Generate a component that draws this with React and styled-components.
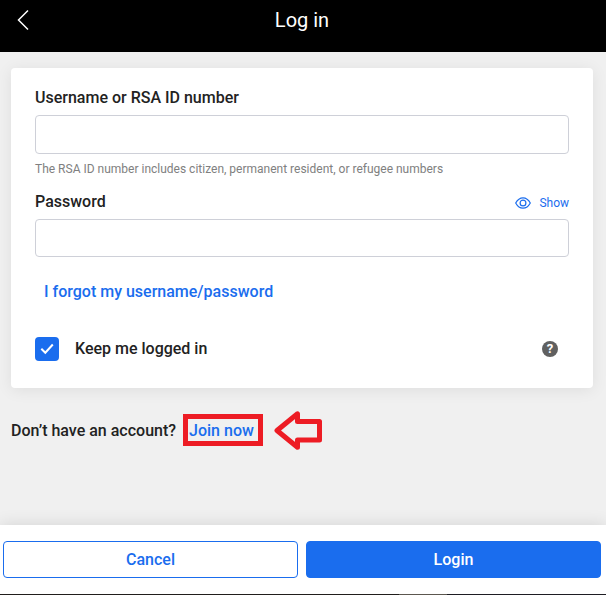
import React, { useState } from 'react';
import styled, { createGlobalStyle } from 'styled-components';

const GlobalStyle = createGlobalStyle`
  * {
    box-sizing: border-box;
  }

  body {
    margin: 0;
    background-color: #f0f0f0;
    color: #222;
    font-family: Roboto, "Liberation Sans", sans-serif;
    font-size: 16px;
    font-weight: 500;
    line-height: 20px;
  }
`;

const Page = styled.div`
  display: flex;
  flex-direction: column;
  height: 100vh;
  overflow: hidden;
`;

const Header = styled.header`
  display: grid;
  grid-template-columns: 40px 1fr 40px;
  align-items: center;
  flex: none;
  height: 52px;
  padding: 0 2px 12px 0;
  background-color: #000;
  color: #fff;
`;

const BackButton = styled.button`
  display: flex;
  height: 22px;
  padding: 0 0 0 16px;
  border: none;
  background: none;
  color: inherit;
`;

const Title = styled.h1`
  margin: 0;
  font-size: 20px;
  font-weight: 400;
  line-height: 24px;
  text-align: center;
`;

const Main = styled.main`
  flex: 1;
  padding: 16px 13px 0 11px;
`;

const Card = styled.section`
  display: flex;
  flex-direction: column;
  height: 320px;
  padding: 20px 24px 27px;
  border-radius: 4px;
  background-color: #fff;
  box-shadow: 0 2px 16px rgba(0, 0, 0, 0.08);
`;

const LabelRow = styled.div`
  display: flex;
  justify-content: space-between;
  align-items: center;
  height: 20px;
  margin-top: ${({ $top }) => $top || 0}px;
  margin-bottom: 7px;
`;

const Input = styled.input`
  width: 100%;
  height: ${({ $height }) => $height}px;
  padding: 0 12px;
  border: 1px solid #ced0d8;
  border-radius: 4px;
  background-color: #fff;
  font: inherit;
  outline: none;
`;

const Hint = styled.p`
  margin: 7px 0 0;
  color: #808080;
  font-size: 12px;
  font-weight: 400;
  line-height: 17px;
`;

const ShowButton = styled.button`
  display: flex;
  align-items: center;
  gap: 8px;
  padding: 2px 0 0;
  border: none;
  background: none;
  color: #1a6dee;
  font: inherit;
  font-size: 12px;
  font-weight: 400;
`;

const Link = styled.a`
  color: #1a6dee;
  text-decoration: none;
`;

const ForgotLink = styled(Link)`
  margin: 25px 0 0 9px;
`;

const RememberRow = styled.div`
  display: flex;
  align-items: center;
  height: 24px;
  margin-top: 35px;
`;

const Checkbox = styled.button`
  width: 24px;
  height: 24px;
  margin-right: 16px;
  padding: 0;
  border: none;
  border-radius: 4px;
  background-color: #1a6dee;
  line-height: 0;
`;

const HelpBadge = styled.span`
  display: flex;
  align-items: center;
  justify-content: center;
  width: 16px;
  height: 16px;
  margin: 0 11px 0 auto;
  border-radius: 50%;
  background-color: #606060;
  color: #fff;
  font-size: 13px;
  font-weight: 700;
  line-height: 16px;
`;

const JoinRow = styled.div`
  display: flex;
  align-items: center;
  height: 40px;
  margin-top: 22px;
`;

const JoinText = styled.span`
  padding-top: 2px;
`;

const JoinBox = styled.div`
  display: flex;
  align-items: center;
  width: 80px;
  height: 32px;
  margin: 0 11px 0 7px;
  padding: 2px 0 0 1px;
  border: 5px solid #ed1c24;
  white-space: nowrap;
`;

const Footer = styled.footer`
  display: flex;
  gap: 8px;
  flex: none;
  height: 69px;
  padding: 16px 5px 16px 3px;
  background-color: #fff;
  box-shadow: 0 0 16px rgba(0, 0, 0, 0.12);
`;

const Button = styled.button`
  flex: 1;
  padding: 0;
  border: 1px solid #1a6dee;
  border-radius: 4px;
  background-color: ${({ $primary }) => ($primary ? '#1a6dee' : '#fff')};
  color: ${({ $primary }) => ($primary ? '#fff' : '#1a6dee')};
  font: inherit;
`;

const BottomEdge = styled.div`
  flex: none;
  height: 1px;
  background: linear-gradient(to right, #211e1c 399px, #5c574f 399px 447px, #1e1d23 447px);
`;

const BackIcon = () => (
    <svg width="14" height="22" viewBox="0 0 14 22" fill="none">
        <path d="M12 1.5 2.5 11 12 20.5" stroke="currentColor" strokeWidth="1.5" />
    </svg>
);

const EyeIcon = () => (
    <svg width="16" height="12" viewBox="0 0 16 12" fill="none" stroke="currentColor" strokeWidth="1.2">
        <path d="M.7 6C2.6 2.5 5 .8 8 .8S13.4 2.5 15.3 6C13.4 9.5 11 11.2 8 11.2S2.6 9.5.7 6Z" />
        <circle cx="8" cy="6" r="2.9" />
    </svg>
);

const CheckIcon = () => (
    <svg width="24" height="24" viewBox="0 0 24 24" fill="none">
        <path d="m6.3 11.7 4 4 7.5-8.2" stroke="#fff" strokeWidth="2" />
    </svg>
);

const ArrowIcon = () => (
    <svg width="48" height="40" viewBox="0 0 48 40" fill="none">
        <path
            d="M3 20.5 23.5 3.8V11.5H45.5V30H23.5V37.3Z"
            stroke="#ed1c24"
            strokeWidth="5"
            strokeLinejoin="round"
        />
    </svg>
);

const App = () => {
    const [showPassword, setShowPassword] = useState(false);
    const [remember, setRemember] = useState(true);

    return (
        <Page>
            <GlobalStyle />
            <Header>
                <BackButton aria-label="Back">
                    <BackIcon />
                </BackButton>
                <Title>Log in</Title>
            </Header>
            <Main>
                <Card>
                    <LabelRow>
                        <label htmlFor="username">Username or RSA ID number</label>
                    </LabelRow>
                    <Input id="username" $height={39} />
                    <Hint>The RSA ID number includes citizen, permanent resident, or refugee numbers</Hint>
                    <LabelRow $top={14}>
                        <label htmlFor="password">Password</label>
                        <ShowButton onClick={() => setShowPassword(!showPassword)}>
                            <EyeIcon />
                            Show
                        </ShowButton>
                    </LabelRow>
                    <Input id="password" type={showPassword ? 'text' : 'password'} $height={38} />
                    <ForgotLink href="#">I forgot my username/password</ForgotLink>
                    <RememberRow>
                        <Checkbox
                            role="checkbox"
                            aria-label="Keep me logged in"
                            aria-checked={remember}
                            onClick={() => setRemember(!remember)}
                        >
                            {remember && <CheckIcon />}
                        </Checkbox>
                        <span>Keep me logged in</span>
                        <HelpBadge>?</HelpBadge>
                    </RememberRow>
                </Card>
                <JoinRow>
                    <JoinText>Don’t have an account?</JoinText>
                    <JoinBox>
                        <Link href="#">Join now</Link>
                    </JoinBox>
                    <ArrowIcon />
                </JoinRow>
            </Main>
            <Footer>
                <Button>Cancel</Button>
                <Button $primary>Login</Button>
            </Footer>
            <BottomEdge />
        </Page>
    );
};

export default App;
